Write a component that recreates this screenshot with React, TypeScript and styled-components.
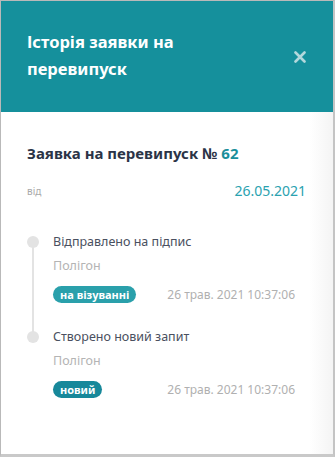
import styled, { createGlobalStyle } from 'styled-components';

const GlobalStyle = createGlobalStyle`
  html, body {
    margin: 0;
    padding: 0;
    background: #ffffff;
  }
  * {
    box-sizing: border-box;
  }
`;

const Panel = styled.div`
  width: 335px;
  height: 457px;
  display: flex;
  flex-direction: column;
  background: #ffffff;
  border: 1px solid #b9b9b9;
  border-right: 2px solid #c4c4c4;
  border-bottom: 3px solid #c9c9c9;
  font-family: 'Noto Sans', 'Open Sans', sans-serif;
  overflow: hidden;
`;

const Header = styled.header`
  height: 111px;
  background-color: #15909c;
  display: flex;
  align-items: center;
  justify-content: space-between;
  padding: 0 25px 0 26px;
`;

const Title = styled.h1`
  margin: 0;
  color: #ffffff;
  font-size: 16.5px;
  font-weight: 700;
  line-height: 27px;
  width: 220px;
  position: relative;
  top: -2px;
`;

const CloseButton = styled.button`
  border: none;
  background: none;
  padding: 0;
  width: 16px;
  height: 16px;
  display: flex;
  align-items: center;
  justify-content: center;
  cursor: pointer;
`;

const Body = styled.main`
  flex: 1;
  padding: 31px 27px 0 26px;
  display: flex;
  flex-direction: column;
  background: linear-gradient(to right, #ffffff 93%, #f4f4f4 100%);
`;

const RequestTitle = styled.h2`
  margin: 0;
  font-size: 15px;
  font-weight: 700;
  color: #2b3447;
  line-height: 20px;
`;

const Accent = styled.span`
  color: #1a8f9b;
`;

const MetaRow = styled.div`
  display: flex;
  align-items: center;
  justify-content: space-between;
  margin-top: 18px;
`;

const MetaLabel = styled.span`
  font-size: 10px;
  color: #a9a9a9;
`;

const MetaDate = styled.span`
  font-size: 14px;
  color: #2aa2b0;
`;

const Timeline = styled.ul`
  list-style: none;
  margin: 34px 0 0;
  padding: 0;
  display: flex;
  flex-direction: column;
`;

const Step = styled.li<{ $last?: boolean }>`
  position: relative;
  padding-left: 26px;
  padding-bottom: ${(p) => (p.$last ? '0' : '26px')};

  &::before {
    content: '';
    position: absolute;
    left: 0;
    top: 2px;
    width: 12px;
    height: 12px;
    border-radius: 50%;
    background: #e3e3e3;
  }

  &::after {
    content: '';
    display: ${(p) => (p.$last ? 'none' : 'block')};
    position: absolute;
    left: 5px;
    top: 8px;
    bottom: -6px;
    width: 2px;
    background: #e3e3e3;
  }
`;

const StepTitle = styled.div`
  font-size: 12.5px;
  color: #4a5060;
  line-height: 16px;
`;

const StepPlace = styled.div`
  font-size: 12.5px;
  color: #b4b4b4;
  line-height: 16px;
  margin-top: 8px;
`;

const StepFooter = styled.div`
  display: flex;
  align-items: center;
  justify-content: space-between;
  margin-top: 12px;
  padding-right: 11px;
`;

const Badge = styled.span<{ $tone?: 'light' | 'dark' }>`
  display: inline-block;
  padding: 0 7px;
  height: 17px;
  line-height: 17px;
  border-radius: 9px;
  font-size: 11px;
  font-weight: 700;
  color: #ffffff;
  background: ${(p) => (p.$tone === 'dark' ? '#17889a' : '#2aa0ab')};
`;

const StepTime = styled.span`
  font-size: 12px;
  color: #b0b0b0;
`;

const steps = [
  { title: 'Відправлено на підпис', place: 'Полігон', status: 'на візуванні', tone: 'light' as const },
  { title: 'Створено новий запит', place: 'Полігон', status: 'новий', tone: 'dark' as const },
];

export default function App() {
  return (
    <>
      <GlobalStyle />
      <Panel>
        <Header>
          <Title>Історія заявки на перевипуск</Title>
          <CloseButton aria-label="Закрити">
            <svg width="12" height="12" viewBox="0 0 12 12">
              <path d="M1.5 1.5 L10.5 10.5 M10.5 1.5 L1.5 10.5" stroke="#b3d8dc" strokeWidth="2.6" strokeLinecap="round" />
            </svg>
          </CloseButton>
        </Header>
        <Body>
          <RequestTitle>
            Заявка на перевипуск № <Accent>62</Accent>
          </RequestTitle>
          <MetaRow>
            <MetaLabel>від</MetaLabel>
            <MetaDate>26.05.2021</MetaDate>
          </MetaRow>
          <Timeline>
            {steps.map((s, i) => (
              <Step key={s.title} $last={i === steps.length - 1}>
                <StepTitle>{s.title}</StepTitle>
                <StepPlace>{s.place}</StepPlace>
                <StepFooter>
                  <Badge $tone={s.tone}>{s.status}</Badge>
                  <StepTime>26 трав. 2021 10:37:06</StepTime>
                </StepFooter>
              </Step>
            ))}
          </Timeline>
        </Body>
      </Panel>
    </>
  );
}
